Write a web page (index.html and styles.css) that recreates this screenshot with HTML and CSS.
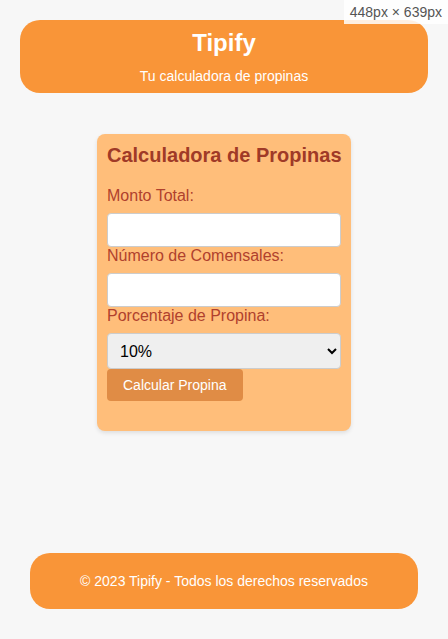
FILE: index.html
```html
<!DOCTYPE html>
<html lang="es">
<head>
<meta charset="utf-8">
<title>Tipify</title>
<link rel="stylesheet" href="styles.css">
</head>
<body>
<div class="dims">448px × 639px</div>
<header class="header">
  <h1 class="title">Tipify</h1>
  <p class="subtitle">Tu calculadora de propinas</p>
</header>
<main class="main">
  <section class="card">
    <h2 class="card-title">Calculadora de Propinas</h2>
    <form class="form">
      <label class="label" for="monto">Monto Total:</label>
      <input class="field" type="number" id="monto">
      <label class="label" for="comensales">Número de Comensales:</label>
      <input class="field" type="number" id="comensales">
      <label class="label" for="porcentaje">Porcentaje de Propina:</label>
      <select class="select" id="porcentaje">
        <option>10%</option>
        <option>15%</option>
        <option>20%</option>
      </select>
      <button class="btn" type="button">Calcular Propina</button>
    </form>
    <div class="result"></div>
  </section>
</main>
<footer class="footer">
  <p class="footer-text">© 2023 Tipify - Todos los derechos reservados</p>
</footer>
</body>
</html>
```

FILE: styles.css
```css
* { box-sizing: border-box; }
html, body { height: 100%; }
body {
  margin: 0;
  padding: 20px;
  min-height: 100vh;
  display: flex;
  flex-direction: column;
  background: #f7f7f7;
  font-family: "Liberation Sans", Arial, sans-serif;
  position: relative;
}
.dims {
  position: absolute;
  top: 0;
  right: 0;
  padding: 4px 6px;
  font-size: 14px;
  line-height: 16px;
  color: #555;
  background: rgba(255, 255, 255, 0.85);
  z-index: 5;
}
.header {
  background: #f99538;
  color: #fff;
  text-align: center;
  border-radius: 20px;
  padding: 9px 10px;
}
.title {
  margin: 0 0 11px;
  font-size: 24px;
  line-height: 28px;
  font-weight: bold;
}
.subtitle {
  margin: 0;
  font-size: 14px;
  line-height: 16px;
}
.main {
  flex: 1;
  display: flex;
  justify-content: center;
  align-items: flex-start;
  padding-top: 41px;
}
.card {
  width: 254px;
  background: #ffbe7a;
  border-radius: 8px;
  padding: 10px;
  box-shadow: 0 2px 4px rgba(0, 0, 0, 0.1);
}
.card-title {
  margin: 0 0 20px;
  font-size: 20px;
  line-height: 23px;
  color: #a03a27;
  white-space: nowrap;
}
.form {
  display: flex;
  flex-direction: column;
  align-items: flex-start;
}
.label {
  display: block;
  font-size: 16px;
  line-height: 18px;
  color: #b0412d;
  margin-bottom: 8px;
}
.field {
  width: 100%;
  height: 34px;
  padding: 8px;
  font-size: 13px;
  border: 1px solid #ccc;
  border-radius: 4px;
  background: #fff;
  margin: 0;
}
.select {
  width: 100%;
  height: 36px;
  padding: 0 4px 0 8px;
  font-size: 16px;
  font-family: "Liberation Sans", Arial, sans-serif;
  border: 1px solid #ccc;
  border-radius: 4px;
  background-color: #efefef;
  color: #000;
  margin: 0;
}
.btn {
  margin: 0;
  height: 32px;
  padding: 0 16px;
  font-size: 14px;
  font-family: "Liberation Sans", Arial, sans-serif;
  color: #fff;
  background: #e08c45;
  border: none;
  border-radius: 4px;
}
.result {
  height: 20px;
}
.footer {
  margin: 0 10px 10px;
  background: #f99538;
  color: #fff;
  text-align: center;
  border-radius: 20px;
  padding: 20px;
}
.footer-text {
  margin: 0;
  font-size: 14px;
  line-height: 16px;
}
```
